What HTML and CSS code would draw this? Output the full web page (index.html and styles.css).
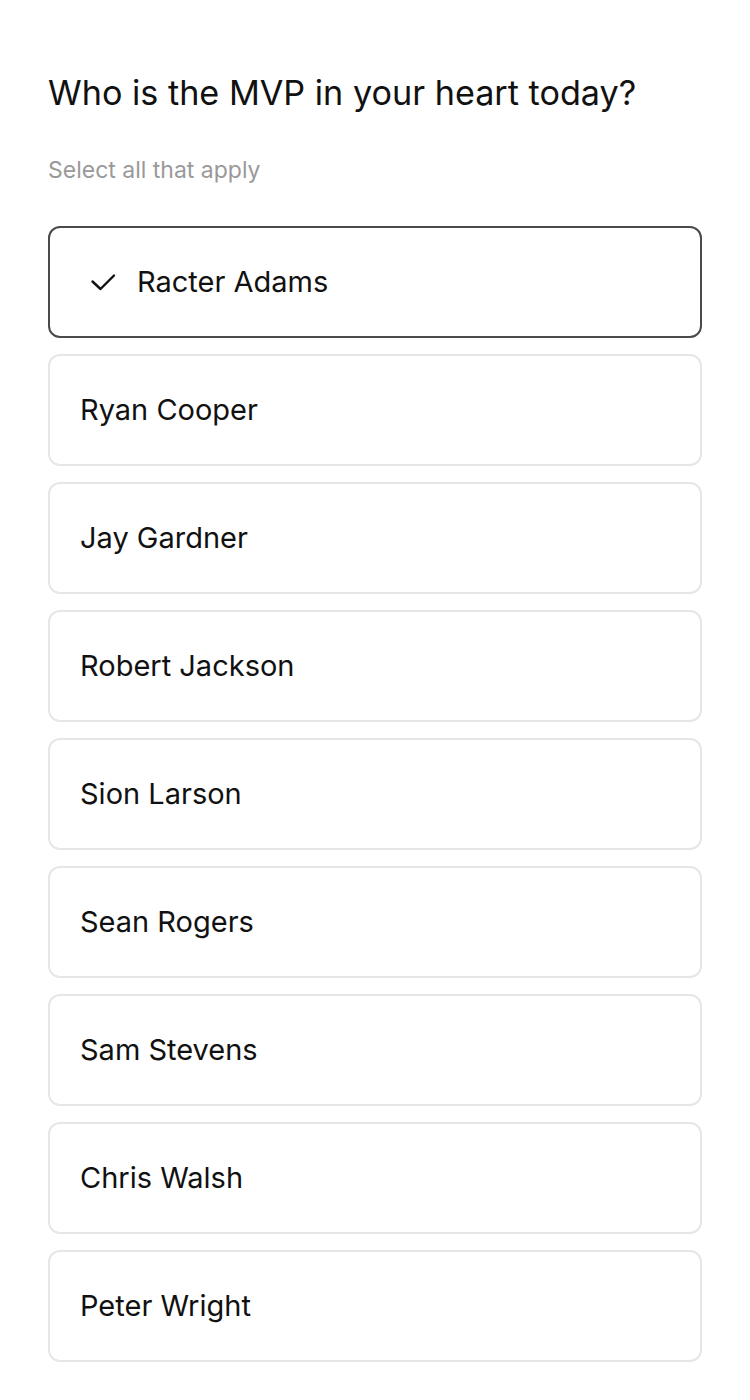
FILE: index.html
```html
<!DOCTYPE html>
<html lang="en">
<head>
    <meta charset="UTF-8">
    <meta name="viewport" content="width=device-width, initial-scale=1.0">
    <title>MVP poll</title>
    <link rel="stylesheet" href="styles.css">
</head>
<body>
    <main class="poll">
        <h1 class="question">Who is the MVP in your heart today?</h1>
        <p class="hint">Select all that apply</p>

        <ul class="options">
            <li class="option selected">
                <svg class="check" width="26" height="18" viewBox="0 0 26 18" fill="none" stroke="currentColor" stroke-width="2.4" stroke-linecap="round" stroke-linejoin="round">
                    <path d="M2.5 8.5l8 7.5L24 2.5"/>
                </svg>
                <span>Racter Adams</span>
            </li>
            <li class="option"><span>Ryan Cooper</span></li>
            <li class="option"><span>Jay Gardner</span></li>
            <li class="option"><span>Robert Jackson</span></li>
            <li class="option"><span>Sion Larson</span></li>
            <li class="option"><span>Sean Rogers</span></li>
            <li class="option"><span>Sam Stevens</span></li>
            <li class="option"><span>Chris Walsh</span></li>
            <li class="option"><span>Peter Wright</span></li>
        </ul>
    </main>
</body>
</html>
```

FILE: styles.css
```css
* {
    margin: 0;
    padding: 0;
    box-sizing: border-box;
}

body {
    font-family: Inter, 'Noto Sans', sans-serif;
    background: #fff;
    color: #111;
}

.poll {
    padding: 73px 48px 0;
}

.question {
    font-size: 34.2px;
    line-height: 40px;
    font-weight: 400;
}

.hint {
    margin-top: 43px;
    font-size: 23px;
    line-height: 28px;
    color: #999;
}

/* Liste des choix */
.options {
    list-style: none;
    margin-top: 42px;
    display: flex;
    flex-direction: column;
    gap: 16px;
}

.option {
    height: 112px;
    border: 2px solid #e6e6e6;
    border-radius: 12px;
    display: flex;
    align-items: center;
    padding: 0 30px;
    font-size: 29px;
    line-height: 34px;
}

.option.selected {
    border-color: #4a4a4a;
    padding-left: 40px;
}

.check {
    margin-right: 21px;
    flex-shrink: 0;
}
```
